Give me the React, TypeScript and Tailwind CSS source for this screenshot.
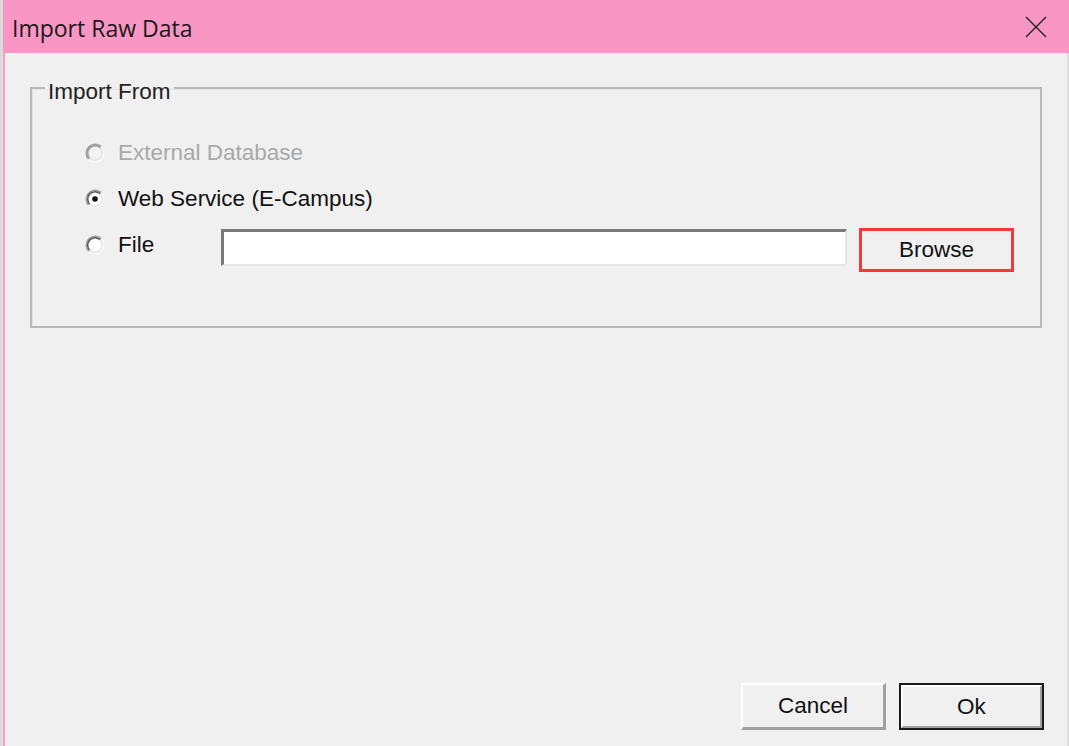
import React from "react";

function Radio({ checked, disabled }: { checked?: boolean; disabled?: boolean }) {
  return (
    <svg width="20" height="20" viewBox="0 0 20 20" className="shrink-0">
      <circle cx="10" cy="10" r="9" fill={disabled ? "#f2f2f2" : "#ffffff"} />
      <path d="M3.64 16.36 A9 9 0 0 1 16.36 3.64" fill="none" stroke="#a0a0a0" strokeWidth="1.5" />
      <path d="M4.7 15.3 A7.5 7.5 0 0 1 15.3 4.7" fill="none" stroke="#555" strokeWidth="1.5" opacity={disabled ? 0.55 : 1} />
      <path d="M16.36 3.64 A9 9 0 0 1 3.64 16.36" fill="none" stroke="#fbfbfb" strokeWidth="1.5" />
      <path d="M15.3 4.7 A7.5 7.5 0 0 1 4.7 15.3" fill="none" stroke="#e3e3e3" strokeWidth="1.5" />
      {checked && <circle cx="10" cy="10" r="2.8" fill="#111" />}
    </svg>
  );
}

export default function App() {
  const font = { fontFamily: '"Liberation Sans", Arial, sans-serif' };
  return (
    <div className="w-[1069px] h-[746px] flex bg-[#dedede] overflow-hidden" style={font}>
      <div className="w-[3px] shrink-0 bg-[#dcdcdc]" />
      <div className="flex-1 flex flex-col">
        <div className="h-[53px] shrink-0 bg-[#f996c3] flex items-center justify-between pl-[9px] pr-[22px]">
          <span className="text-[23px] text-[#1a1a1a] mt-[3px]" style={{ fontFamily: '"Open Sans", "Liberation Sans", sans-serif' }}>
            Import Raw Data
          </span>
          <svg width="22" height="22" viewBox="0 0 22 22">
            <path d="M1 1 L21 21 M21 1 L1 21" stroke="#222" strokeWidth="1.4" />
          </svg>
        </div>
        <div className="flex-1 bg-[#f0f0f0] border-l-2 border-[#f9a0c8] mr-[2px] flex flex-col pl-[25px] pr-[22px]">
          <fieldset className="mt-[19px] h-[256px] w-[1012px] border-2 border-[#b9b9b9] shadow-[inset_1px_1px_0_#e4e4e4] p-0 m-0 min-w-0">
            <legend className="ml-[13px] px-[3px] pt-[8px] text-[22.5px] text-[#222] leading-[24px]">Import From</legend>
            <div className="flex flex-col mt-[26px] pl-[53px]">
              <div className="flex items-center h-[46px]">
                <Radio disabled />
                <span className="ml-[13px] text-[22.5px] text-[#a9a9a9]">External Database</span>
              </div>
              <div className="flex items-center h-[46px]">
                <Radio checked />
                <span className="ml-[13px] text-[22.5px] text-[#111]">Web Service (E-Campus)</span>
              </div>
              <div className="flex items-center h-[46px]">
                <Radio />
                <span className="ml-[13px] text-[22.5px] text-[#111] w-[103px]">File</span>
                <div className="self-start mt-[7px] w-[626px] h-[37px] bg-white border-t-[3px] border-l-[3px] border-t-[#7a7a7a] border-l-[#7a7a7a] border-b-2 border-r-2 border-b-[#e6e6e6] border-r-[#e6e6e6]" />
                <div className="self-start mt-[6px] ml-[12px] w-[155px] h-[44px] border-[3px] border-[#f23a3a] bg-[#f0f0f0] flex items-center justify-center text-[22.5px] text-[#111]">
                  Browse
                </div>
              </div>
            </div>
          </fieldset>
          <div className="flex-1" />
          <div className="flex justify-end gap-[13px] mb-[16px] mr-[1px]">
            <div className="w-[145px] h-[47px] bg-[#f0f0f0] border-t-2 border-l-2 border-white border-b-[3px] border-r-[3px] border-b-[#a0a0a0] border-r-[#a0a0a0] flex items-center justify-center text-[22.5px] text-[#111]">
              Cancel
            </div>
            <div className="w-[145px] h-[47px] border-2 border-[#1a1a1a] bg-[#f0f0f0]">
              <div className="w-full h-full border-t-2 border-l-2 border-white border-b-2 border-r-2 border-b-[#a0a0a0] border-r-[#a0a0a0] flex items-center justify-center text-[22.5px] text-[#111]">
                Ok
              </div>
            </div>
          </div>
        </div>
      </div>
    </div>
  );
}
